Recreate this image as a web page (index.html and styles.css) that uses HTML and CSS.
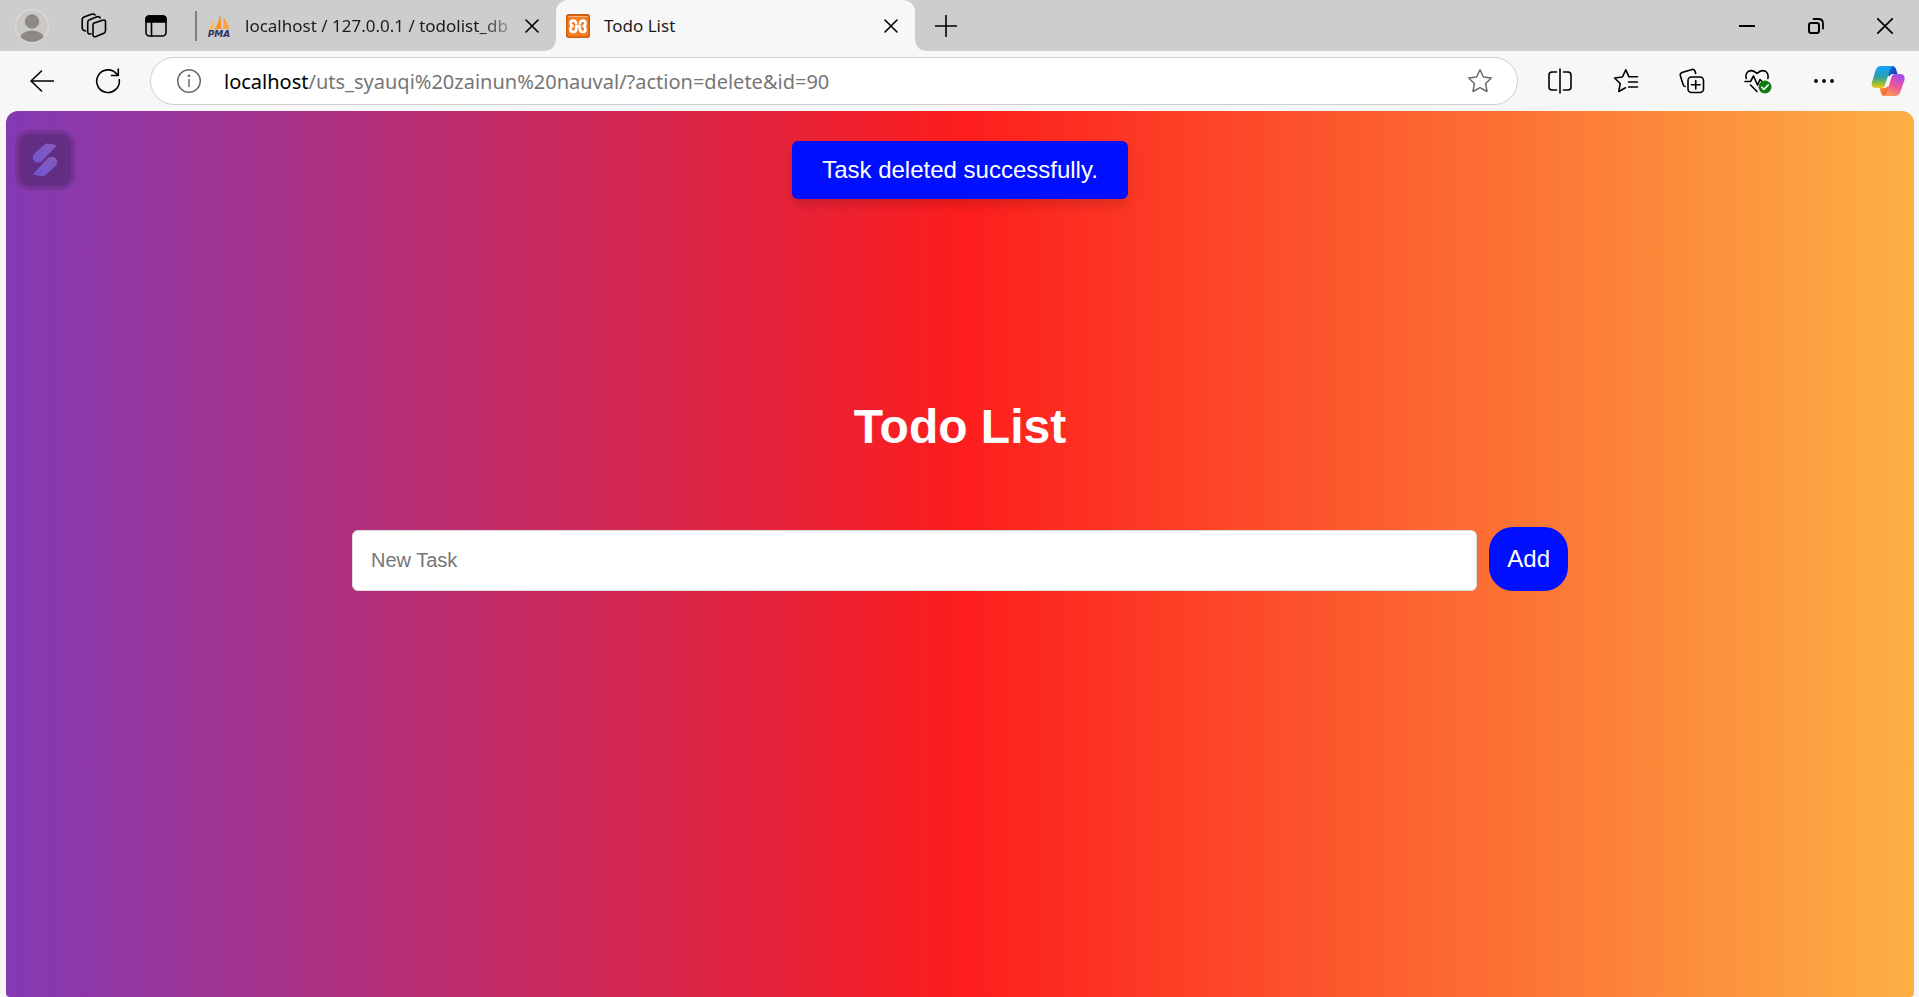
FILE: index.html
```html
<!DOCTYPE html>
<html lang="en">
<head>
<meta charset="utf-8">
<title>Todo List</title>
<link rel="stylesheet" href="styles.css">
</head>
<body>
<header class="tab-strip">
  <button class="strip-button" aria-label="Profile">
    <svg width="34" height="34" viewBox="0 0 34 34"><defs><clipPath id="face"><circle cx="17" cy="17" r="16"/></clipPath></defs><circle cx="17" cy="17" r="16.3" fill="#cac8c5" stroke="#dddbd7" stroke-width="1.3"/><g clip-path="url(#face)" fill="#8b8886"><circle cx="17" cy="12.500" r="7.200"/><ellipse cx="17" cy="31" rx="12.500" ry="9.500"/></g></svg>
  </button>
  <button class="strip-button" aria-label="Workspaces">
    <svg class="line" width="26" height="26" viewBox="0 0 26 26"><path d="M12.500 10.300 21.500 7.200Q24.500 6.500 24.500 9V17.500Q24.500 19.500 22.800 20.200L15 23.500Q12 24.600 12 21.800V12Q12 10.800 12.500 10.300Z"/><path d="M10 20.800Q6.700 21.500 6.700 18.500V9.500Q6.700 7.500 8.500 6.800L16 3.800Q18.300 3 19.200 5"/><path d="M4.500 18Q1.200 17.500 1.200 15V6.500Q1.200 4.800 3 4L10.500 1.200Q13 .5 14 2"/></svg>
  </button>
  <button class="strip-button" aria-label="Tab actions">
    <svg class="line" width="22" height="22" viewBox="0 0 22 22"><rect x="1" y="1" width="20" height="20" rx="3.500"/><path d="M1 7V4Q1 1 4 1H18Q21 1 21 4V7Z" fill="#000"/><path d="M6.500 7V21"/></svg>
  </button>
  <span class="separator"></span>
  <div class="tab">
    <svg class="favicon" viewBox="0 0 24 24"><path d="M6.500 4 7 15 1 16Q5 11 6.500 4Z" fill="#fbb863"/><path d="M12.500 0Q15 8 14 15L7 15.500Q12 10 12.500 0Z" fill="#f79425"/><path d="M16 2Q20 9 23 15L15.500 14.500Q17.500 9 16 2Z" fill="#f8a33d"/><text x="12" y="23" text-anchor="middle" class="pma">PMA</text></svg>
    <a class="tab-title faded" href="#">localhost / 127.0.0.1 / todolist_db</a>
    <button class="tab-close" aria-label="Close tab"><svg class="line" width="14" height="14" viewBox="0 0 14 14"><path d="M1 1 13 13M13 1 1 13"/></svg></button>
  </div>
  <div class="tab active">
    <svg class="favicon" viewBox="0 0 24 24"><rect width="24" height="24" rx="2.500" fill="#d0600f"/><rect x="1.500" y="2" width="21" height="20.500" rx="2" fill="#f47b20"/><path d="M2 2.500H22" stroke="#f9b283"/><path d="M10 9.300Q9.800 6.500 7.200 6.500 4.500 6.700 4.500 9.300 4.600 11.300 6.600 12 4.400 13 4.500 15.300 4.800 18 7.400 18 10.200 17.800 10.200 14.800V13Q10.300 12 12 12 13.800 12 13.800 13V14.800Q13.800 17.800 16.600 18 19.300 17.900 19.500 15.300 19.600 13 17.400 12 19.500 11.200 19.500 9.200 19.400 6.600 16.800 6.500 14.200 6.500 14 9.300" fill="none" stroke="#fff" stroke-width="2.700" stroke-linecap="round" stroke-linejoin="round"/></svg>
    <a class="tab-title" href="#">Todo List</a>
    <button class="tab-close" aria-label="Close tab"><svg class="line" width="14" height="14" viewBox="0 0 14 14"><path d="M1 1 13 13M13 1 1 13"/></svg></button>
  </div>
  <button class="strip-button" aria-label="New tab"><svg class="line" width="22" height="22" viewBox="0 0 22 22"><path d="M11 .5V21.500M.5 11H21.500"/></svg></button>
  <div class="window-controls">
    <button aria-label="Minimize"><svg class="line" width="16" height="16" viewBox="0 0 16 16"><path d="M.5 8H15.500" stroke-width="2"/></svg></button>
    <button aria-label="Restore"><svg class="line" width="16" height="16" viewBox="0 0 16 16"><rect x="1" y="5" width="10" height="10" rx="2.200" stroke-width="2"/><path d="M5.500 1H10.500Q15 1 15 5.500V10.500" stroke-width="1.800"/></svg></button>
    <button aria-label="Close"><svg class="line" width="16" height="16" viewBox="0 0 16 16"><path d="M.8 .8 15.200 15.200M15.200 .8 .8 15.200" stroke-width="1.800"/></svg></button>
  </div>
</header>

<nav class="toolbar">
  <button class="tool" aria-label="Back"><svg class="line" width="24" height="22" viewBox="0 0 24 22"><path d="M11.500 1 1 11 11.500 21M1 11H23.500"/></svg></button>
  <button class="tool" aria-label="Refresh"><svg class="line" width="26" height="26" viewBox="0 0 26 26"><path d="M24.200 11.500A11.300 11.300 0 1 1 22 6.300L23.300 7.500M23.300 1V7.500H16.500"/></svg></button>
  <div class="address">
    <svg class="info" width="26" height="26" viewBox="0 0 26 26"><circle cx="13" cy="13" r="11.300"/><path d="M13 11V19"/><circle cx="13" cy="7.800" r=".6"/></svg>
    <div class="url" role="textbox" contenteditable="true" spellcheck="false" aria-label="Address"><span class="host">localhost</span>/uts_syauqi%20zainun%20nauval/?action=delete&amp;id=90</div>
    <button class="favorite" aria-label="Add to favorites"><svg width="26" height="26" viewBox="0 0 26 26"><path d="M13 1.800 16.400 9 24.300 10 18.600 15.500 20 23.500 13 19.700 6 23.500 7.400 15.500 1.700 10 9.600 9Z"/></svg></button>
  </div>
  <button class="tool" aria-label="Split screen"><svg class="line" width="24" height="26" viewBox="0 0 24 26"><path d="M12 1V25M8.500 4H4Q1 4 1 7V19Q1 22 4 22H8.500M15.500 4H20Q23 4 23 7V19Q23 22 20 22H15.500"/></svg></button>
  <button class="tool" aria-label="Favorites"><svg class="line" width="26" height="26" viewBox="0 0 26 26"><path d="M24.500 8.800H16L12.800 1.800 9.400 9 1.500 10 7.200 15.500 5.800 23.500 12.500 19.800M15.500 14H24.500M15.500 19H24.500"/></svg></button>
  <button class="tool" aria-label="Collections"><svg class="line" width="26" height="26" viewBox="0 0 26 26"><rect x="9" y="9" width="15.500" height="15.500" rx="3.500"/><path d="M16.750 12.500V21M12.500 16.750H21M6 18.500Q4.500 18 4 16.200L1.300 7.500Q.8 5.200 3 4.400L13 1.500Q15 1 16 3.200L16.700 5.500"/></svg></button>
  <button class="tool" aria-label="Browser essentials"><svg class="line" width="28" height="26" viewBox="0 0 28 26"><path d="M2.300 10.500Q1 6 4 3.700 8.500 .8 13 5.500 17.500 .8 22 3.700 25 6 23.800 10.500M1 13.500H6.500L9.500 8 13.500 17 16 11.500 18 13.500M6.500 17 13 23.500"/><circle cx="21" cy="19" r="6.500" fill="#107c10" stroke="none"/><path d="M17.800 19.200 20 21.400 24.200 17" stroke="#fff"/></svg></button>
  <button class="tool" aria-label="Settings and more"><svg width="20" height="6" viewBox="0 0 20 6"><circle cx="2" cy="3" r="1.900"/><circle cx="10" cy="3" r="1.900"/><circle cx="18" cy="3" r="1.900"/></svg></button>
  <button class="tool copilot" aria-label="Copilot">
    <svg width="34" height="32" viewBox="0 0 34 32"><defs><linearGradient id="cool" x1="0" y1="0" x2="0" y2="1"><stop offset=".1" stop-color="#16a2ef"/><stop offset=".5" stop-color="#2c9fa9"/><stop offset=".75" stop-color="#84bb46"/><stop offset="1" stop-color="#f6c715"/></linearGradient><linearGradient id="warm" x1=".7" y1="0" x2=".3" y2="1"><stop offset="0" stop-color="#a44cf0"/><stop offset=".5" stop-color="#e9549d"/><stop offset="1" stop-color="#ff9a55"/></linearGradient><linearGradient id="deep" x1="0" y1="0" x2="1" y2="1"><stop offset="0" stop-color="#0d6fd6"/><stop offset="1" stop-color="#1b35c0"/></linearGradient><linearGradient id="ember" x1="0" y1="0" x2="1" y2="1"><stop offset="0" stop-color="#f9a32a"/><stop offset="1" stop-color="#ee4b42"/></linearGradient></defs><path d="M18 1H21Q24 1 25 4L26.500 9H22Q19 9 18 12L16 7Z" fill="url(#deep)"/><path d="M9 23H14L18 21 16.500 27Q15 31 12.500 31 10.500 30 9.500 27Z" fill="url(#ember)"/><path d="M10 1H22Q20 2 19 5L14 20Q13 23 10 23H5Q-.5 23 1 17L4.500 5.500Q6 1 10 1Z" fill="url(#cool)"/><path d="M24 31H12.500Q15 30 16 27L20.500 12Q21.500 9 24.500 9H29Q34.500 9 33.500 15L29.500 26.500Q28 31 24 31Z" fill="url(#warm)"/></svg>
  </button>
</nav>

<main class="page">
  <button class="assistant" aria-label="Assistant">
    <svg width="26" height="34" viewBox="0 0 26 34"><defs><linearGradient id="blade" x1=".7" y1="0" x2=".3" y2="1"><stop offset="0" stop-color="#8659bd"/><stop offset="1" stop-color="#6f58cf"/></linearGradient></defs><path d="M12.500 1.500Q14 .3 16 .5L25 2.200 10 18Q7 21 3.500 19 .3 16.500 1 13 1.300 11.500 3 10Z" fill="url(#blade)"/><path d="M13 32.500Q12 33.700 10 33.300L.7 31.500 15.500 15.500Q18.500 12.500 22.500 14.500 25.700 16.500 25.300 20 25 21.500 23.500 23Z" fill="url(#blade)"/></svg>
  </button>
  <p class="toast" role="status">Task deleted successfully.</p>
  <section class="todo">
    <h1>Todo List</h1>
    <form class="task-form">
      <input type="text" placeholder="New Task" aria-label="New Task">
      <button type="button">Add</button>
    </form>
  </section>
</main>
</body>
</html>
```
FILE: styles.css
```css
* {
  box-sizing: border-box;
}

body {
  margin: 0;
  height: 100vh;
  display: flex;
  flex-direction: column;
  overflow: hidden;
  background: #f7f7f7;
  font-family: "Noto Sans", "Open Sans", sans-serif;
}

button {
  display: flex;
  align-items: center;
  justify-content: center;
  flex: none;
  padding: 0;
  border: 0;
  background: none;
}

svg {
  display: block;
  flex: none;
}

.line {
  fill: none;
  stroke: #000;
  stroke-width: 1.6;
  stroke-linecap: round;
  stroke-linejoin: round;
}

/* Tab strip */

.tab-strip {
  display: flex;
  align-items: center;
  flex: none;
  height: 51px;
  padding-left: 1px;
  background: #cdcdcd;
}

.strip-button {
  width: 62px;
  height: 51px;
}

.separator {
  width: 2px;
  height: 30px;
  margin-left: 8px;
  background: #808080;
}

.tab {
  position: relative;
  display: flex;
  align-items: center;
  width: 359px;
  height: 51px;
  padding: 0 10px;
}

.tab.active {
  border-radius: 12px 12px 0 0;
  background: #f7f7f7;
}

.tab.active::before,
.tab.active::after {
  content: "";
  position: absolute;
  bottom: 0;
  width: 10px;
  height: 10px;
}

.tab.active::before {
  right: 100%;
  background: radial-gradient(circle at 0 0, transparent 9px, #f7f7f7 10px);
}

.tab.active::after {
  left: 100%;
  background: radial-gradient(circle at 100% 0, transparent 9px, #f7f7f7 10px);
}

.favicon {
  width: 24px;
  height: 24px;
  margin-right: 14px;
}

.pma {
  font: italic bold 9px "DejaVu Sans", sans-serif;
  fill: #34315f;
}

.tab-title {
  flex: 1;
  color: #1b1b1b;
  font-size: 17px;
  line-height: 24px;
  text-decoration: none;
  white-space: nowrap;
}

.faded {
  background: linear-gradient(to right, #1b1b1b 86%, #a8a8a8 98%);
  background-clip: text;
  color: transparent;
}

.tab-close {
  width: 28px;
  height: 28px;
}

.window-controls {
  display: flex;
  margin-left: auto;
}

.window-controls button {
  width: 69px;
  height: 51px;
}

/* Toolbar */

.toolbar {
  display: flex;
  align-items: center;
  flex: none;
  height: 60px;
  padding: 0 0 0 9px;
}

.tool {
  width: 66px;
  height: 48px;
}

.copilot {
  width: 62px;
}

.address {
  display: flex;
  align-items: center;
  flex: 1;
  height: 48px;
  margin: 0 9px;
  padding: 0 24px 0 25px;
  border: 1px solid #cfcfcf;
  border-radius: 24px;
  background: #fff;
}

.info,
.favorite svg {
  fill: none;
  stroke: #6b6b6b;
  stroke-width: 1.5;
  stroke-linejoin: round;
}

.url {
  flex: 1;
  margin-left: 22px;
  padding-top: 2px;
  color: #767676;
  font-size: 20px;
  line-height: 28px;
  white-space: nowrap;
}

.host {
  color: #000;
}

/* Page */

.page {
  position: relative;
  flex: 1;
  display: flex;
  flex-direction: column;
  align-items: center;
  margin: 0 5px 0 6px;
  padding: 30px 24px 0;
  border-radius: 12px 12px 4px 4px;
  background: linear-gradient(to right, #833ab4, #fd1d1d, #fcb045);
  font-family: "Liberation Sans", Arial, sans-serif;
}

.assistant {
  position: absolute;
  top: 19px;
  left: 9px;
  width: 60px;
  height: 60px;
  border: 4px solid #773396;
  border-radius: 15px;
  background: #632d84;
}

.toast {
  margin: 0;
  padding: 15px 30px;
  border-radius: 6px;
  background: #0010ff;
  box-shadow: 0 6px 12px rgba(0, 0, 0, 0.14);
  color: #fff;
  font-size: 24px;
  line-height: 28px;
}

.todo {
  width: 100%;
  max-width: 1216px;
  margin-top: 200px;
}

h1 {
  margin: 0;
  color: #fff;
  font-size: 48px;
  line-height: 56px;
  text-align: center;
}

.task-form {
  display: flex;
  align-items: flex-end;
  gap: 12px;
  margin-top: 72px;
}

.task-form input {
  flex: 1;
  height: 61px;
  padding: 0 18px;
  border: 1px solid #ddd;
  border-radius: 6px;
  background: #fff;
  font-family: inherit;
  font-size: 20px;
}

.task-form input::placeholder {
  color: #757575;
}

.task-form button {
  height: 64px;
  padding: 0 18px;
  border-radius: 24px;
  background: #0010ff;
  color: #fff;
  font-family: inherit;
  font-size: 24px;
}
```
